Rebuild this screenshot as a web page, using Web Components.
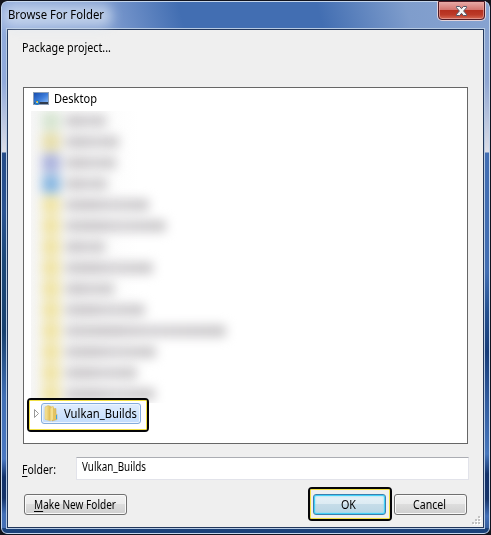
<!DOCTYPE html>
<html lang="en"><head><meta charset="utf-8"><title>Browse For Folder</title>
<style>html,body{margin:0;width:491px;height:535px;overflow:hidden;background:#15151c}</style></head><body>
<folder-dialog></folder-dialog>
<script>
const define=(name,html,setup)=>customElements.define(name,class extends HTMLElement{
  connectedCallback(){
    if(this.shadowRoot)return;
    const t=document.createElement('template');t.innerHTML=html;
    this.attachShadow({mode:'open'}).append(t.content.cloneNode(true));
    if(setup)setup(this,this.shadowRoot);
  }
});

/* Single line of text, condensed to the width in its "w" attribute */
define('fit-text',`<style>:host{display:block;height:16px;line-height:16px;white-space:nowrap;flex:none}
span{display:inline-block;transform-origin:0 0}::slotted(u){text-decoration:underline;text-underline-offset:2px;text-decoration-thickness:1px}</style><span><slot></slot></span>`,
(el,r)=>{const w=+el.getAttribute('w');el.style.width=w+'px';const s=r.querySelector('span');
  s.style.transform='scaleX('+w/s.getBoundingClientRect().width+')';});

define('close-button',`<style>:host{display:block;box-sizing:border-box;width:49px;height:20px;border:1px solid #e3d3da;border-top:0;border-radius:0 0 5px 5px}
div{box-sizing:border-box;height:19px;border:1px solid #521b25;border-radius:0 0 4px 4px;box-shadow:inset 0 0 0 1px #e9a8a4aa;background:linear-gradient(#e6aaa7 0,#d47670 45%,#b5301f 50%,#bc3a28 75%,#d56a55);display:grid;place-items:center}
svg{display:block}</style><div><svg width="13" height="12" viewBox="0 0 13 12"><path d="M1.5 1.5h3.2l1.8 2.2 1.8-2.2h3.2v1.2L8.6 6l2.9 3.3v1.2H8.3L6.5 8.3l-1.8 2.2H1.5V9.3L4.4 6 1.5 2.7z" fill="#f6f6f6" stroke="#535666" stroke-width="1"/></svg></div>`);

define('push-button',`<style>:host{display:flex;box-sizing:border-box;height:21px;border:1px solid #707070;border-radius:3px;box-shadow:inset 0 0 0 1px #fafafa;background:linear-gradient(#f2f2f2 0,#ebebeb 49%,#dddddd 50%,#cfcfcf);justify-content:center;align-items:center;flex:none;padding-right:2px}
:host([primary]){border-color:#3b7fae;box-shadow:inset 0 0 0 1px #43d0f8,inset 0 0 2px 1px #70dcf6;background:linear-gradient(#e7f1f6 0,#dcebf3 49%,#c5dce8 50%,#b9d5e4)}</style><slot></slot>`);

define('highlight-frame',`<style>:host{display:block;box-sizing:border-box;border:2px solid #050508;border-radius:4px;background:var(--fill,#fff)}
div{box-sizing:border-box;height:100%;border:1px solid #f0df45;border-radius:1px;display:flex;padding:var(--inset)}</style><div><slot></slot></div>`);

define('desktop-icon',`<style>:host,svg{display:block}</style><svg width="16" height="13" viewBox="0 0 16 13"><defs><linearGradient id="g" x2="1" y2="1"><stop stop-color="#174eae"/><stop offset=".55" stop-color="#3f7edb"/><stop offset="1" stop-color="#8ab9f2"/></linearGradient></defs><path d="M0 0h16v13H0z" fill="#8d9fb6"/><path d="M1 1h14v10H1z" fill="url(#g)"/><path d="M1 10h14v2H1z" fill="#303b4c"/><circle cx="4" cy="10.3" r="2.6" fill="#2479ca"/><path d="M3 9h1v1H3z" fill="#f36b30"/><path d="M4 9h1v1H4z" fill="#a0dc65"/><path d="M3 10h1v1H3z" fill="#82cdfa"/><path d="M4 10h1v1H4z" fill="#ffdf35"/></svg>`);

define('folder-icon',`<style>:host,svg{display:block}</style><svg width="15" height="17" viewBox="0 0 15 17"><defs><linearGradient id="f"><stop stop-color="#f8e8a1"/><stop offset="1" stop-color="#dfb94f"/></linearGradient></defs><path d="M5 2l4-1 1 1v13H5z" fill="#e8cd75"/><path d="M8 4l4-.5v5l1 1v5L8 16z" fill="#e4c461" stroke="#cba64c" stroke-width=".5"/><path d="M1 2l3-1.5 2.5.8V16L1 14.3z" fill="url(#f)" stroke="#ddbd62" stroke-width=".5"/><path d="M6.5 3.5L9 2v12.5L6.5 16z" fill="#f5df8d"/><path d="M12 10h1v4h-1z" fill="#42a5dc"/></svg>`);

/* Obscured tree entries: icon tint and text extent per row */
define('blurred-rows',`<style>:host{display:block;width:240px;height:292px;overflow:hidden;background:linear-gradient(90deg,#f6f6f6,#fff 45%)}
div.all{margin-top:-1px;filter:blur(5.5px)}
.r{display:flex;height:21px;align-items:center;padding-left:11px}
i{width:18px;height:18px;margin-right:5px;flex:none}b{height:12px;background:linear-gradient(90deg,#cfcdcf,#c8c5c8 30%,#d2d0d3 55%,#c8c6c8);border-radius:3px}</style><div class="all"></div>`,
(el,r)=>{const rows=[['#d5e4cf',41],['#e6dda9',54],['#a9b1dc',51],['#85b5e0',42],...[84,101,40,88,49,80,161,91,72,90].map(w=>['#f0e4a4',w])];
 const d=r.querySelector('div');rows.forEach(([c,w])=>{const n=document.createElement('div');n.className='r';n.innerHTML='<i style="background:'+c+'"></i><b style="width:'+w+'px"></b>';d.append(n)});});

define('folder-tree',`<style>:host{display:block;box-sizing:border-box;width:445px;height:357px;border:1px solid #666;background:#fff}
.root{display:flex;height:19px;padding:4px 0 0 9px;gap:5px}.root fit-text{margin-top:-1px}
blurred-rows{margin-left:7px}
highlight-frame{width:122px;height:34px;margin:-5px 0 0 3px;position:relative;--inset:2px 3px}
.arrow{display:block;width:7px;height:11px;margin:5px 1px 0 0;flex:none}
.sel{display:flex;box-sizing:border-box;width:100px;height:21px;border:1px solid #84acdd;border-radius:3px;box-shadow:inset 0 0 0 1px #edf5fe;background:linear-gradient(#e0edfd,#c2dcfc);padding:1px 0 0 2px;gap:5px;flex:none}
.sel fit-text{margin-top:1px}
</style><div class="root"><desktop-icon></desktop-icon><fit-text w="43">Desktop</fit-text></div>
<blurred-rows></blurred-rows>
<highlight-frame><svg class="arrow" viewBox="0 0 7 11"><path d="M1.5 1.5v8L5.5 5.5z" fill="#fff" stroke="#999"/></svg><div class="sel"><folder-icon></folder-icon><fit-text w="73">Vulkan_Builds</fit-text></div></highlight-frame>`);

define('folder-field',`<style>:host{display:flex;height:23px}
.l{width:53.5px;padding-top:5px;flex:none}.i{box-sizing:border-box;width:393px;height:23px;border:1px solid #e2e3ea;border-top-color:#abadb3;background:#fff;padding:1px 0 0 5px}</style>
<div class="l"><fit-text w="34"><u>F</u>older:</fit-text></div><div class="i"><fit-text w="64">Vulkan_Builds</fit-text></div>`);

define('resize-grip',`<style>:host,svg{display:block}</style><svg width="9" height="9"><g fill="#fff"><path d="M7 1h2v2H7zM4 4h2v2H4zM7 4h2v2H7zM1 7h2v2H1zM4 7h2v2H4zM7 7h2v2H7z"/></g><g fill="#c2c2c2"><path d="M6 0h2v2H6zM3 3h2v2H3zM6 3h2v2H6zM0 6h2v2H0zM3 6h2v2H3zM6 6h2v2H6z"/></g></svg>`);

define('folder-dialog',`<style>
:host{display:block;box-sizing:border-box;width:491px;height:535px;border:1px solid #10131f;border-radius:7px 7px 6px 6px;overflow:hidden;font:12px "Noto Sans","Open Sans",sans-serif;color:#000;background:#15151c}
.glass{box-sizing:border-box;width:489px;height:533px;border:1px solid #c4d5eb;border-radius:6px;padding:0 4px 4px;
background:
linear-gradient(#1b4179,#1b4179) 0 100%/100% 5px no-repeat,
linear-gradient(75deg,#94addc 0,#7d9bcf 22%,#426eb2 37%,#426eb2 65%,#7f9dcc 83%,#87a3d1) 0 0/100% 27px no-repeat,
linear-gradient(#8fabdc 0,#91aadb 80px,#dcdde6 150px,#254b87 151px,#2a5291 210px,#1c4778 260px,#18406f 330px,#416fb4 395px,#4b78c2 457px,#12316a 475px,#153369 496px,#426fb7 512px,#4770b5 526px) 0 0/5px 100% no-repeat,
linear-gradient(#829fcd 0,#90a7d3 80px,#dcdde6 150px,#426eb3 151px,#426eb3 270px,#24508f 310px,#163c79 350px,#315c9f 400px,#4777bd 452px,#12316a 472px,#153369 497px,#426fb7 514px,#365f9f 526px) 100% 0/5px 100% no-repeat}
.bar{display:flex;justify-content:space-between;height:26px;padding-left:2px}
.title{position:relative;padding-top:5px}
.title::before{content:"";position:absolute;inset:3px -8px 1px -5px;background:#dae5f3b0;filter:blur(6px);border-radius:9px}
.title fit-text{position:relative}
close-button{margin:-1px -1px 0 0}
.client{box-sizing:border-box;width:479px;height:501px;border:1px solid #b8cbe3;}
.body{box-sizing:border-box;width:477px;height:499px;border:1px solid #22375c;background:#efefef;padding:10px 0 0 14px}
folder-tree{margin:31px 0 13px 1px}
.actions{display:flex;align-items:flex-start;margin-top:7px}
.mk{width:103px;margin:7px 0 0 2px}.ok{width:73px}
highlight-frame{width:84px;height:34px;margin-left:181px;--fill:#efefef;--inset:4px 2px}
.cn{width:73px;margin:7px 0 0 2px}
resize-grip{margin:29px 0 0 5px}
</style><div class="glass"><div class="bar"><div class="title"><fit-text w="96">Browse For Folder</fit-text></div><close-button></close-button></div>
<div class="client"><div class="body"><fit-text w="89">Package project...</fit-text><folder-tree></folder-tree><folder-field></folder-field>
<div class="actions"><push-button class="mk"><fit-text w="82"><u>M</u>ake New Folder</fit-text></push-button><highlight-frame><push-button primary class="ok"><fit-text w="15">OK</fit-text></push-button></highlight-frame><push-button class="cn"><fit-text w="33">Cancel</fit-text></push-button><resize-grip></resize-grip></div></div></div></div>`);
</script></body></html>
